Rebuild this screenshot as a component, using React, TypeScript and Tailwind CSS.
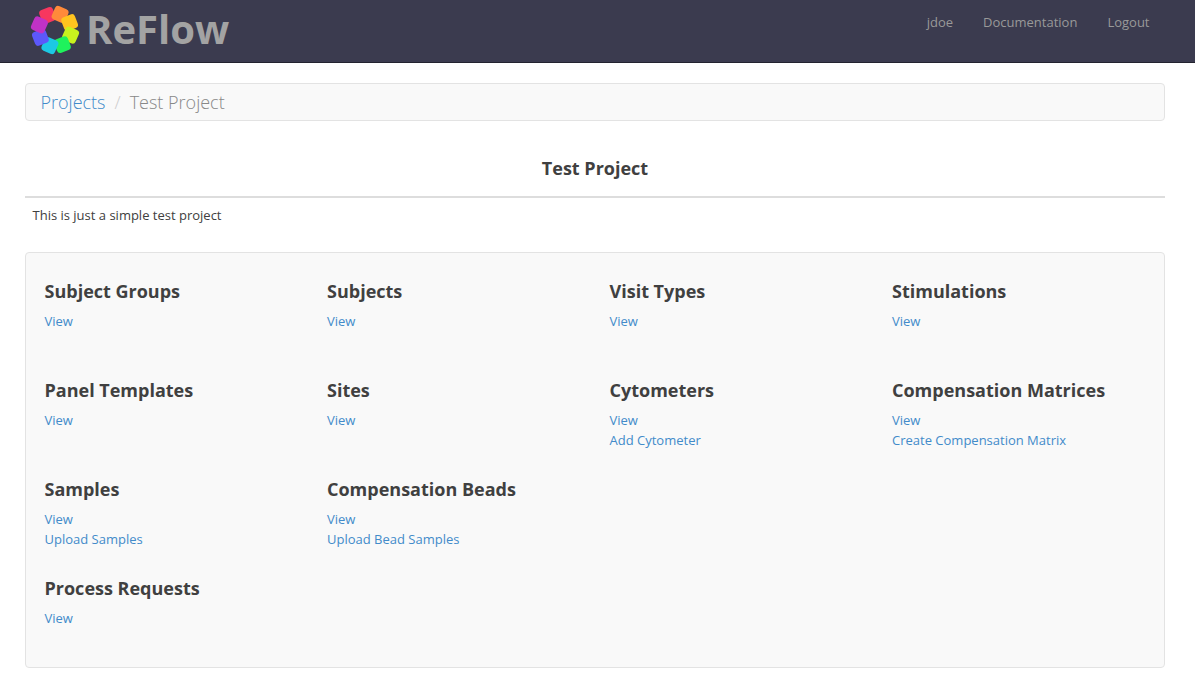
const cards = [
  { title: 'Subject Groups', links: ['View'] },
  { title: 'Subjects', links: ['View'] },
  { title: 'Visit Types', links: ['View'] },
  { title: 'Stimulations', links: ['View'] },
  { title: 'Panel Templates', links: ['View'] },
  { title: 'Sites', links: ['View'] },
  { title: 'Cytometers', links: ['View', 'Add Cytometer'] },
  { title: 'Compensation Matrices', links: ['View', 'Create Compensation Matrix'] },
  { title: 'Samples', links: ['View', 'Upload Samples'] },
  { title: 'Compensation Beads', links: ['View', 'Upload Bead Samples'] },
  { title: 'Process Requests', links: ['View'], newRow: true },
];

const petals = ['#f7375f', '#ff8a3a', '#ffc41f', '#c9f21e', '#1ff25c', '#1cc9e4', '#5c58fb', '#c032c6'];

const Logo = () => (
  <svg width="50" height="50" viewBox="-25 -25 50 50" className="shrink-0">
    {petals.map((color, i) => (
      <rect
        key={color}
        x="-7.25"
        y="-7.25"
        width="14.5"
        height="14.5"
        rx="3.5"
        fill={color}
        transform={`rotate(${i * 45 - 27}) translate(0 -16.4) rotate(6)`}
      />
    ))}
  </svg>
);

export default function App() {
  return (
    <div className="min-h-[691px] bg-white font-['Open_Sans',sans-serif] text-[13px] text-[#404040]">
      <nav className="flex h-[63px] items-start justify-between border-b border-[#23232f] bg-[#3b3b4f] pr-[30.5px] pl-[29.5px]">
        <a className="flex h-[60px] items-center gap-[6.5px]">
          <Logo />
          <span className="pb-[2px] text-[40px] leading-none font-bold text-[#a3a3a3]">ReFlow</span>
        </a>
        <ul className="flex text-[13px] leading-[20px] text-[#999]">
          <li className="px-[15px] py-[12px]">jdoe</li>
          <li className="px-[15px] py-[12px]">Documentation</li>
          <li className="px-[15px] py-[12px]">Logout</li>
        </ul>
      </nav>

      <main className="pt-[20px] pr-[30px] pl-[25px]">
        <div className="flex h-[38px] items-center rounded border border-[#e3e3e3] bg-[#f9f9f9] px-[14.5px] text-[18px] font-light">
          <a className="text-[#428bca]">Projects</a>
          <span className="px-[9px] text-[#ccc]">/</span>
          <span className="text-[#888]">Test Project</span>
        </div>

        <h1 className="mt-[34px] text-center text-[18px] leading-[27px] font-bold">Test Project</h1>
        <div className="mt-[14px] h-[2px] bg-[#ddd]" />
        <p className="mt-[7px] pl-[7.5px] text-[13px] leading-[20px]">This is just a simple test project</p>

        <div className="mt-[27px] grid h-[416px] grid-cols-[repeat(4,282.5px)] content-start rounded border border-[#e3e3e3] bg-[#f9f9f9] pt-[25px] pl-[18.5px]">
          {cards.map((card) => (
            <section key={card.title} className={card.newRow ? 'col-start-1 h-[99px]' : 'h-[99px]'}>
              <h2 className="text-[18px] leading-[27px] font-bold">{card.title}</h2>
              <div className="mt-[6px] flex flex-col leading-[20px] text-[#428bca]">
                {card.links.map((link) => (
                  <a key={link}>{link}</a>
                ))}
              </div>
            </section>
          ))}
        </div>
      </main>
    </div>
  );
}
